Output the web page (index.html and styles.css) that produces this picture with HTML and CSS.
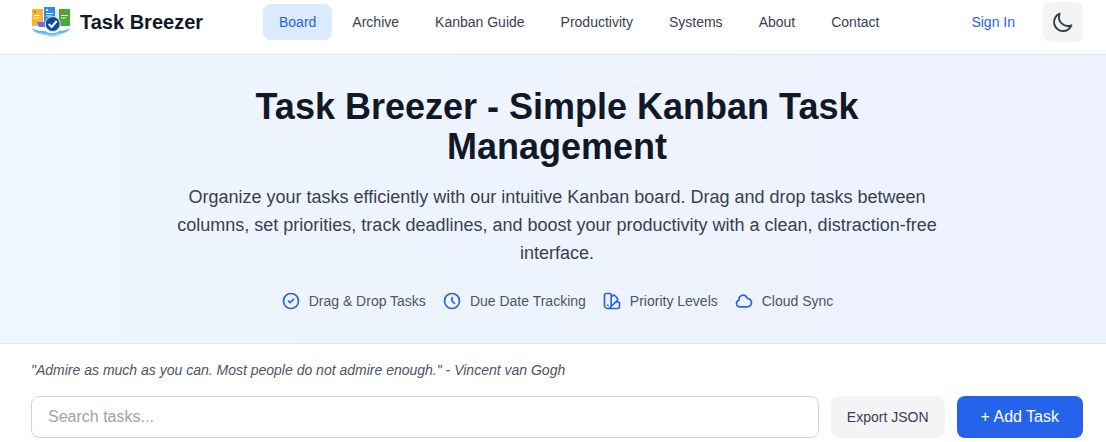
FILE: index.html
```html
<!DOCTYPE html>
<html lang="en">
<head>
<meta charset="utf-8">
<title>Task Breezer</title>
<link rel="stylesheet" href="styles.css">
</head>
<body>
<header class="topbar">
  <a class="brand" href="#">
    <svg class="brand-logo" viewBox="0 0 40 36" aria-hidden="true">
      <rect x="1" y="5" width="11" height="17" fill="#fdb62c"/>
      <rect x="13" y="3" width="11" height="18" fill="#2b8fe6"/>
      <rect x="28" y="5" width="11" height="17" fill="#4ca63a"/>
      <rect x="24" y="6" width="4" height="14" fill="#dfeaf3"/>
      <rect x="3" y="7" width="2" height="2" fill="#4aa84a"/>
      <rect x="15" y="5" width="2" height="2" fill="#eaf5ff"/>
      <rect x="30" y="7" width="2" height="2" fill="#e0503c"/>
      <path d="M3 11.5h6M3 14h5M15 9.5h7M15 12h6M30 11.5h7M30 14h5" stroke="#f2f6ea" stroke-width="1" fill="none"/>
      <path d="M6 18h8v5H8z" fill="#6a6ee8"/>
      <path d="M1 24c4 3 9 3 13 3 5 3 10 3 14 0 4 0 8-1 11-3-1 4-7 5-10 6-5 3-10 3-14 1-5 0-12-2-14-7z" fill="#5cb8ee"/>
      <path d="M6 29c4 1 8 1 11 2 4 1 8 0 11-2" stroke="#bfe6f9" stroke-width="1" fill="none"/>
      <circle cx="21.7" cy="20" r="7.5" fill="#124a9c" stroke="#dff1fb" stroke-width="1"/>
      <path d="M17.7 20l3 3 5-6" stroke="#fff" stroke-width="2" fill="none"/>
    </svg>
    <span class="brand-name">Task Breezer</span>
  </a>
  <nav class="nav">
    <a class="nav-link is-active" href="#">Board</a>
    <a class="nav-link" href="#">Archive</a>
    <a class="nav-link" href="#">Kanban Guide</a>
    <a class="nav-link" href="#">Productivity</a>
    <a class="nav-link" href="#">Systems</a>
    <a class="nav-link" href="#">About</a>
    <a class="nav-link" href="#">Contact</a>
  </nav>
  <div class="top-actions">
    <a class="sign-in" href="#">Sign In</a>
    <button class="theme-btn" type="button" aria-label="Toggle theme">
      <svg class="moon" viewBox="0 0 24 24" aria-hidden="true"><path d="M20.354 15.354A9 9 0 0 1 8.646 3.646 9.003 9.003 0 0 0 12 21a9.003 9.003 0 0 0 8.354-5.646z"/></svg>
    </button>
  </div>
</header>

<section class="hero">
  <h1 class="hero-title">Task Breezer - Simple Kanban Task Management</h1>
  <p class="hero-text">Organize your tasks efficiently with our intuitive Kanban board. Drag and drop tasks between columns, set priorities, track deadlines, and boost your productivity with a clean, distraction-free interface.</p>
  <ul class="features">
    <li class="feature">
      <svg class="feature-icon" viewBox="0 0 24 24" aria-hidden="true"><path d="M9 12l2 2 4-4m6 2a9 9 0 1 1-18 0 9 9 0 0 1 18 0z"/></svg>
      Drag &amp; Drop Tasks
    </li>
    <li class="feature">
      <svg class="feature-icon" viewBox="0 0 24 24" aria-hidden="true"><path d="M12 8v4l3 3m6-3a9 9 0 1 1-18 0 9 9 0 0 1 18 0z"/></svg>
      Due Date Tracking
    </li>
    <li class="feature">
      <svg class="feature-icon" viewBox="0 0 24 24" aria-hidden="true"><path d="M7 21a4 4 0 0 1-4-4V5a2 2 0 0 1 2-2h4a2 2 0 0 1 2 2v12a4 4 0 0 1-4 4zm0 0h12a2 2 0 0 0 2-2v-4a2 2 0 0 0-2-2h-2.343M11 7.343l1.657-1.657a2 2 0 0 1 2.828 0l2.829 2.829a2 2 0 0 1 0 2.828l-8.486 8.485M7 17h.01"/></svg>
      Priority Levels
    </li>
    <li class="feature">
      <svg class="feature-icon" viewBox="0 0 24 24" aria-hidden="true"><path d="M3 15a4 4 0 0 0 4 4h9a5 5 0 1 0-.1-9.999 5.002 5.002 0 1 0-9.78 2.096A4.001 4.001 0 0 0 3 15z"/></svg>
      Cloud Sync
    </li>
  </ul>
</section>

<main class="board">
  <p class="quote">"Admire as much as you can. Most people do not admire enough." - Vincent van Gogh</p>
  <div class="toolbar">
    <input class="search" type="text" placeholder="Search tasks...">
    <button class="btn btn-export" type="button">Export JSON</button>
    <button class="btn btn-add" type="button">+ Add Task</button>
  </div>
</main>
</body>
</html>
```
FILE: styles.css
```css
* { box-sizing: border-box; }
html, body { margin: 0; height: 442px; overflow: hidden; }
body { font-family: "Liberation Sans", Arial, sans-serif; background: #fff; color: #111827; }

.topbar {
  display: flex;
  align-items: center;
  height: 55px;
  padding: 2px 23px 12px 31px;
  background: #fff;
  border-bottom: 1px solid #e5e7eb;
}
.brand { display: flex; align-items: center; gap: 9px; width: 232px; color: #111827; text-decoration: none; }
.brand-logo { width: 40px; height: 36px; flex: none; }
.brand-name { font-size: 20px; line-height: 28px; font-weight: 700; }

.nav { display: flex; gap: 4px; }
.nav-link {
  padding: 10px 16px;
  border-radius: 8px;
  font-size: 14px;
  line-height: 16px;
  color: #374151;
  text-decoration: none;
}
.nav-link.is-active { background: #dbeafe; color: #2563eb; }

.top-actions { display: flex; align-items: center; gap: 12px; margin-left: auto; }
.sign-in { padding: 8px 16px; font-size: 14px; line-height: 20px; color: #2563eb; text-decoration: none; }
.theme-btn {
  display: flex;
  align-items: center;
  justify-content: center;
  width: 40px;
  height: 40px;
  padding: 0;
  border: 0;
  border-radius: 8px;
  background: #f3f4f6;
}
.moon { width: 24px; height: 24px; fill: none; stroke: #374151; stroke-width: 2; stroke-linecap: round; stroke-linejoin: round; }

.hero {
  height: 289px;
  padding: 32px 16px 0 24px;
  background: linear-gradient(90deg, #eff6ff, #eef2ff);
  border-bottom: 1px solid #e5e7eb;
  text-align: center;
}
.hero-title { max-width: 672px; margin: 0 auto 16px; font-size: 36px; line-height: 40px; font-weight: 700; color: #111827; }
.hero-text { max-width: 768px; margin: 0 auto 24px; font-size: 18px; line-height: 28px; color: #374151; }
.features { display: flex; justify-content: center; gap: 16px; margin: 0; padding: 0; list-style: none; }
.feature { display: flex; align-items: center; gap: 8px; font-size: 14px; line-height: 20px; color: #4b5563; }
.feature-icon { width: 20px; height: 20px; flex: none; fill: none; stroke: #2563eb; stroke-width: 2; stroke-linecap: round; stroke-linejoin: round; }

.board { padding: 16px 23px 0 31px; }
.quote { margin: 0 0 16px; font-size: 14px; line-height: 20px; font-style: italic; color: #4b5563; }
.toolbar { display: flex; gap: 12px; }
.search {
  flex: 1;
  min-width: 0;
  height: 42px;
  padding: 0 16px;
  border: 1px solid #d1d5db;
  border-radius: 8px;
  background: #fff;
  font: 16px "Liberation Sans", Arial, sans-serif;
  color: #111827;
}
.search::placeholder { color: #9ca3af; opacity: 1; }
.btn {
  height: 42px;
  padding: 0 16px;
  border: 0;
  border-radius: 8px;
  font-family: "Liberation Sans", Arial, sans-serif;
}
.btn-export { background: #f3f4f6; color: #374151; font-size: 14px; }
.btn-add { padding: 0 24px; background: #2563eb; color: #fff; font-size: 16px; }
```
